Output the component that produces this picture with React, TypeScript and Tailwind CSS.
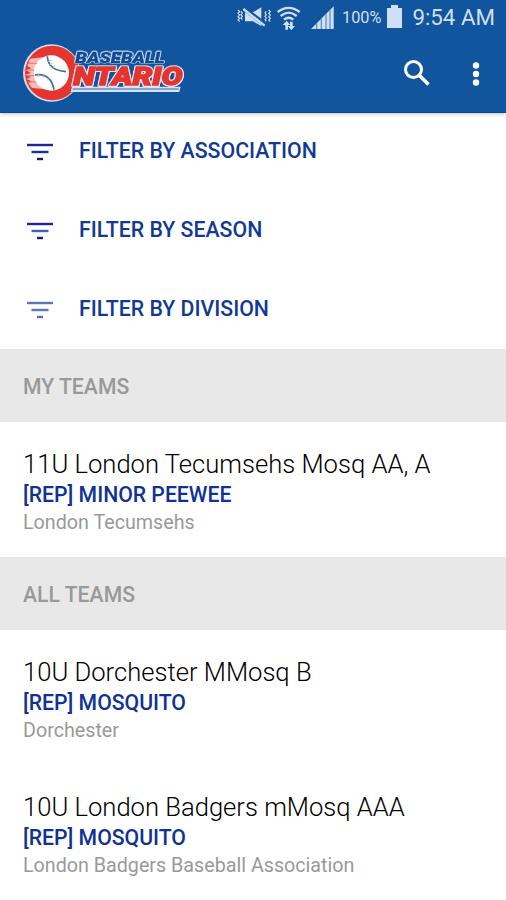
import React from 'react';

interface Team {
  id: string;
  name: string;
  division: string;
  association: string;
}

const filters = [
  { id: 'association', label: 'FILTER BY ASSOCIATION', top: '#1a2a98', middle: '#16339a', bottom: '#1a1a80' },
  { id: 'season', label: 'FILTER BY SEASON', top: '#1c2496', middle: '#3c62b0', bottom: '#1a1a80' },
  { id: 'division', label: 'FILTER BY DIVISION', top: '#6078b2', middle: '#5c78b4', bottom: '#5a6cae' },
];

const myTeams: Team[] = [
  { id: '1', name: '11U London Tecumsehs Mosq AA, A', division: '[REP] MINOR PEEWEE', association: 'London Tecumsehs' },
];

const allTeams: Team[] = [
  { id: '2', name: '10U Dorchester MMosq B', division: '[REP] MOSQUITO', association: 'Dorchester' },
  { id: '3', name: '10U London Badgers mMosq AAA', division: '[REP] MOSQUITO', association: 'London Badgers Baseball Association' },
];

function StatusBar() {
  return (
    <div className="flex h-9 items-center pl-[236px] text-[#cfdff4]">
      <svg className="-mt-1" width="36" height="24" viewBox="0 0 108 72" fill="none" stroke="currentColor">
        <path d="M6 18l5 5-5 5 5 5-5 5 5 5-5 5 5 5M15 22l4 5-4 5 4 5-4 5 4 5M91 22l-4 5 4 5-4 5 4 5-4 5 4 5M98 18l5 5-5 5 5 5-5 5 5 5-5 5 5 5" strokeWidth="3.5" />
        <path d="M27 25h24l25-15v56L51 52H27z" fill="currentColor" stroke="none" />
        <path d="M18 9l66 50" stroke="#10559e" strokeWidth="14" />
        <path d="M22 15l64 50" strokeWidth="7" />
      </svg>
      <svg className="ml-[4px]" width="26" height="26" viewBox="0 0 78 78" fill="none" stroke="currentColor" strokeWidth="7">
        <path d="M5 21Q38-4 71 21M14 33Q38 13 62 33M24 44Q38 32 52 44" />
        <path d="M32 74V56M46 50v20" strokeWidth="8" />
        <path d="M20 60l12-13 11 13zM35 63l11 13 11-13z" fill="currentColor" stroke="none" />
      </svg>
      <svg className="-mt-px ml-[9px]" width="24" height="24" viewBox="0 0 72 72">
        <path d="M0 69L68 1v68z" fill="currentColor" />
        <path d="M17 52v17M31 38v31M45 24v45M57 12v57" stroke="#6c91c0" strokeWidth="4" />
      </svg>
      <span className="ml-[7px] mt-px text-[16.3px]">100%</span>
      <svg className="ml-[6px] -mt-1" width="15" height="24" viewBox="0 0 15 24">
        <path d="M4 1h7v3h4v20H0V4h4z" fill="currentColor" />
      </svg>
      <span className="ml-[10px] whitespace-nowrap text-[22.3px]">9:54 AM</span>
    </div>
  );
}

function Logo() {
  return (
    <svg width="170" height="64" viewBox="30 18 510 192">
      <circle cx="125" cy="111" r="86" fill="#d5dcf0" />
      <circle cx="127" cy="111" r="82" fill="#e5352f" />
      <path d="M60 68l50-6v98l-44-4-12-16 12-4-17-7 14-6-17-7 16-5-14-9 16-5-12-7z" fill="#f5bcbc" />
      <path d="M42 102h36M44 119h36M52 82h34M54 138h30" stroke="#e6706e" strokeWidth="3" />
      <circle cx="124" cy="111" r="53" fill="#fff" />
      <path d="M112 61q2 42 56 46M74 117q48-8 58 44" fill="none" stroke="#456c9f" strokeWidth="5" />
      <path d="M111 77l13-4M117 89l11-8M128 99l6-10M84 124l2-12M99 126l4-11M112 133l8-8" stroke="#a9bbd5" strokeWidth="3" />
      <path d="M186 152H512l-4 16H182z" fill="#d5e2f4" />
      <path d="M188 159H506" stroke="#3b67a8" strokeWidth="3" />
      <g className="font-[Roboto]" fontWeight="900" fontStyle="italic">
        <text
          x="196" y="81" fontSize="43" textLength="268" lengthAdjust="spacingAndGlyphs" fill="#114a92" stroke="#114a92" strokeWidth="1"
          className="[filter:drop-shadow(2px_0_0_#d5e2f4)_drop-shadow(-2px_0_0_#d5e2f4)_drop-shadow(0_-2px_0_#d5e2f4)]"
        >
          BASEBALL
        </text>
        <text
          x="190" y="146" fontSize="76" textLength="328" lengthAdjust="spacingAndGlyphs" fill="#e5352f" stroke="#e5352f" strokeWidth="4"
          className="[filter:drop-shadow(3px_0_0_#e3e6f4)_drop-shadow(-3px_0_0_#e3e6f4)_drop-shadow(0_3px_0_#e3e6f4)_drop-shadow(0_-2px_0_#e3e6f4)]"
        >
          NTARIO
        </text>
      </g>
    </svg>
  );
}

function AppBar() {
  return (
    <div className="flex h-[76px] items-center pl-5">
      <div className="h-16">
        <Logo />
      </div>
      <button className="ml-[213px] -mt-0.5" aria-label="Search">
        <svg width="28" height="28" viewBox="0 0 28 28" fill="none" stroke="#fff" strokeWidth="3">
          <circle cx="10.5" cy="10.5" r="8" />
          <path d="M16 16L25.5 25.5" strokeWidth="3.6" />
        </svg>
      </button>
      <button className="ml-[40px] -mt-px" aria-label="More options">
        <svg width="10" height="26" viewBox="0 0 10 26" fill="#fff">
          <circle cx="5" cy="4.5" r="3.2" />
          <circle cx="5" cy="13" r="3.2" />
          <circle cx="5" cy="21.5" r="3.2" />
        </svg>
      </button>
    </div>
  );
}

function SectionHeader({ title }: { title: string }) {
  return (
    <h2 className="flex h-[73px] items-center bg-[#e8e8e8] pl-[23px] pt-[3px] text-[21.2px] font-medium text-[#999]">
      {title}
    </h2>
  );
}

function TeamRow({ team }: { team: Team }) {
  return (
    <li className="h-[135px] whitespace-nowrap pl-[23px] pt-[26px]">
      <p className="text-[25.6px] font-light leading-[33px] text-black">{team.name}</p>
      <p className="text-[21.2px] font-medium leading-[28px] text-[#0f3293]">{team.division}</p>
      <p className="text-[19.7px] leading-[28px] text-[#999]">{team.association}</p>
    </li>
  );
}

function App() {
  return (
    <div className="h-[900px] overflow-hidden bg-white font-[Roboto,sans-serif]">
      <header className="h-[113px] border-b border-[#0c4689] bg-[#10559e] shadow-[0_1px_4px_rgba(0,0,0,0.25)]">
        <StatusBar />
        <AppBar />
      </header>

      <div className="h-[236px]">
        {filters.map(filter => (
          <button key={filter.id} className="flex h-[79px] w-full items-center pb-[3px] pl-[26px] text-[21.3px] font-medium text-[#123a94]">
            <svg width="28" height="20" viewBox="0 0 28 20" className="mt-px">
              <path d="M1 3h26" stroke={filter.top} strokeWidth="2.4" />
              <path d="M5.5 10h17" stroke={filter.middle} strokeWidth="2.4" />
              <path d="M11 17h6" stroke={filter.bottom} strokeWidth="2.4" />
            </svg>
            <span className="ml-[25px]">{filter.label}</span>
          </button>
        ))}
      </div>

      <SectionHeader title="MY TEAMS" />
      <ul>
        {myTeams.map(team => (
          <TeamRow key={team.id} team={team} />
        ))}
      </ul>

      <SectionHeader title="ALL TEAMS" />
      <ul>
        {allTeams.map(team => (
          <TeamRow key={team.id} team={team} />
        ))}
      </ul>
    </div>
  );
}

export default App;
